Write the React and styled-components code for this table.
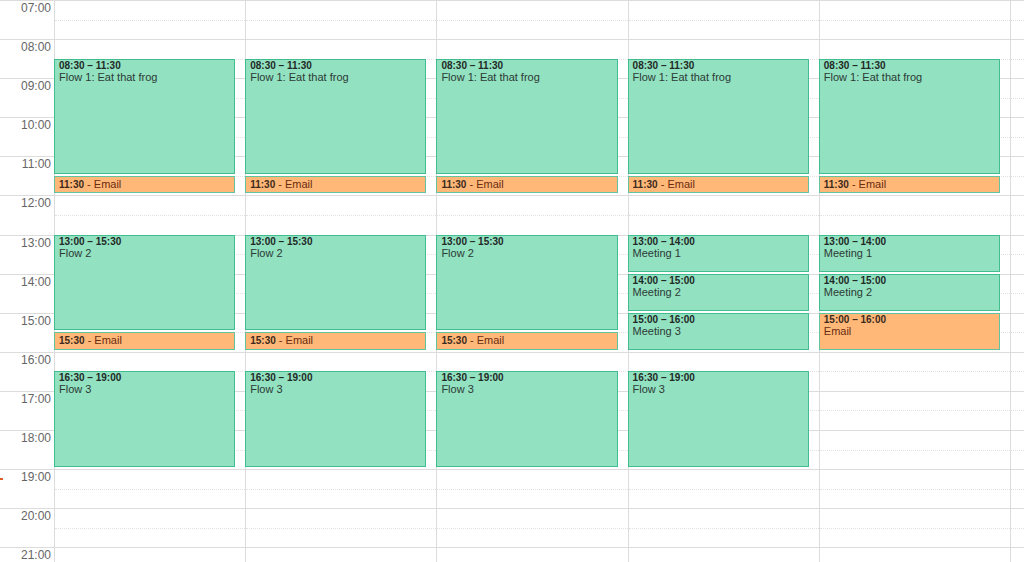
import React from "react";
import styled, { createGlobalStyle } from "styled-components";

const Global = createGlobalStyle`
  html, body { margin: 0; padding: 0; background: #fff; overflow: hidden; }
  body { font-family: "Liberation Sans", Arial, sans-serif; }
`;

const HALF = 19.55;
const START_HOUR = 7;
const HOURS = 15;

const Grid = styled.div`
  display: grid;
  grid-template-columns: 55px repeat(5, 1fr) 13px;
  grid-template-rows: repeat(${HOURS * 2}, ${HALF}px);
  width: 1024px;
  height: 562px;
  overflow: hidden;
`;

const TimeLabel = styled.div`
  grid-column: 1;
  grid-row: ${(p) => p.$row} / span 2;
  box-sizing: border-box;
  position: relative;
  border-top: 1px solid #dcdcdc;
  border-right: 1px solid #dcdcdc;
  padding-right: 3px;
  text-align: right;
  font-size: 12px;
  line-height: 14px;
  color: #666;
`;

const NowMark = styled.span`
  position: absolute;
  left: 0;
  top: 8px;
  width: 3px;
  height: 2px;
  background: #e0602a;
`;

const HourCell = styled.div`
  grid-column: ${(p) => p.$col};
  grid-row: ${(p) => p.$row} / span 2;
  box-sizing: border-box;
  position: relative;
  border-top: 1px solid #dcdcdc;
  border-right: ${(p) => (p.$last ? "none" : "1px solid #dcdcdc")};

  &::after {
    content: "";
    position: absolute;
    left: 0;
    right: 0;
    top: ${HALF - 1}px;
    border-top: 1px dotted #e2e2e2;
  }
`;

const EventBox = styled.div`
  grid-column: ${(p) => p.$col};
  grid-row: ${(p) => p.$start} / ${(p) => p.$end};
  z-index: 1;
  margin: 0 11px 2px -1px;
  box-sizing: border-box;
  overflow: hidden;
  border: 1px solid ${(p) => (p.$kind === "orange" ? "#62c49f" : "#42bd91")};
  background: ${(p) => (p.$kind === "orange" ? "#ffb878" : "#92e1c0")};
  padding: 0 4px;
  color: ${(p) => (p.$kind === "orange" ? "#6a2c10" : "#2c3a36")};
`;

const EventTime = styled.div`
  font-size: 10px;
  line-height: 11px;
  font-weight: bold;
  color: ${(p) => (p.$kind === "orange" ? "#3d2a1c" : "#1f2a27")};
  white-space: nowrap;
`;

const EventTitle = styled.div`
  font-size: 11px;
  line-height: 12px;
  white-space: nowrap;
`;

const InlineLine = styled.div`
  font-size: 11px;
  line-height: 15px;
  white-space: nowrap;
`;

const InlineTime = styled.span`
  font-size: 10px;
  font-weight: bold;
  color: ${(p) => (p.$kind === "orange" ? "#3d2a1c" : "#1f2a27")};
`;

const pad = (n) => String(n).padStart(2, "0");
const fmt = (t) => `${pad(Math.floor(t))}:${t % 1 ? "30" : "00"}`;

const flow1 = { s: 8.5, e: 11.5, title: "Flow 1: Eat that frog", kind: "green" };
const email1 = { s: 11.5, e: 12, title: "Email", kind: "orange", inline: true };
const flow2 = { s: 13, e: 15.5, title: "Flow 2", kind: "green" };
const email2 = { s: 15.5, e: 16, title: "Email", kind: "orange", inline: true };
const flow3 = { s: 16.5, e: 19, title: "Flow 3", kind: "green" };
const m1 = { s: 13, e: 14, title: "Meeting 1", kind: "green" };
const m2 = { s: 14, e: 15, title: "Meeting 2", kind: "green" };
const m3 = { s: 15, e: 16, title: "Meeting 3", kind: "green" };
const email3 = { s: 15, e: 16, title: "Email", kind: "orange" };

const days = [
  [flow1, email1, flow2, email2, flow3],
  [flow1, email1, flow2, email2, flow3],
  [flow1, email1, flow2, email2, flow3],
  [flow1, email1, m1, m2, m3, flow3],
  [flow1, email1, m1, m2, email3],
];

const toLine = (t) => Math.round((t - START_HOUR) * 2) + 1;

export default function App() {
  const hours = Array.from({ length: HOURS }, (_, i) => i);
  return (
    <>
      <Global />
      <Grid>
        {hours.map((i) => (
          <TimeLabel key={`l${i}`} $row={i * 2 + 1}>
            {pad(START_HOUR + i)}:00
            {START_HOUR + i === 19 && <NowMark />}
          </TimeLabel>
        ))}
        {hours.map((i) =>
          [2, 3, 4, 5, 6, 7].map((c) => (
            <HourCell key={`c${i}-${c}`} $row={i * 2 + 1} $col={c} $last={c === 7} />
          ))
        )}
        {days.map((evs, d) =>
          evs.map((ev, k) => (
            <EventBox
              key={`e${d}-${k}`}
              $col={d + 2}
              $start={toLine(ev.s)}
              $end={toLine(ev.e)}
              $kind={ev.kind}
            >
              {ev.inline ? (
                <InlineLine>
                  <InlineTime $kind={ev.kind}>{fmt(ev.s)}</InlineTime> - {ev.title}
                </InlineLine>
              ) : (
                <>
                  <EventTime $kind={ev.kind}>
                    {fmt(ev.s)} – {fmt(ev.e)}
                  </EventTime>
                  <EventTitle>{ev.title}</EventTitle>
                </>
              )}
            </EventBox>
          ))
        )}
      </Grid>
    </>
  );
}
